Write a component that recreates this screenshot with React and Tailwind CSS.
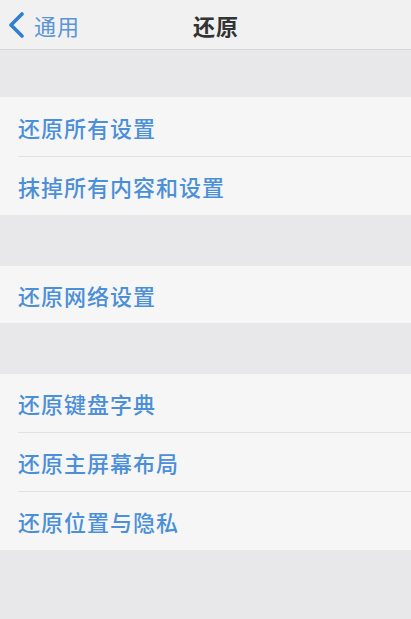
import React from "react";

const font = { fontFamily: '"Noto Sans CJK SC", "Noto Sans", sans-serif' };

function Row({ label, h, sep }) {
  return (
    <div className="flex flex-col">
      {sep && <div className="ml-[18px] h-px bg-[#e2e2e4]" />}
      <div className={`flex items-center pl-[18px] ${h}`}>
        <span className="text-[22px] leading-none tracking-[1px] font-medium text-[#4b8fd8]">{label}</span>
      </div>
    </div>
  );
}

export default function App() {
  return (
    <div className="w-[411px] h-[619px] bg-[#e8e8ea] flex flex-col overflow-hidden" style={font}>
      <div className="relative h-[50px] bg-[#f1f1f1] border-b border-[#d8d8da] flex items-center">
        <div className="flex items-center pl-[8px] gap-[9px]">
          <svg width="17" height="26" viewBox="0 0 17 26" className="mt-[1px]">
            <path d="M14 2 L3 13 L14 24" fill="none" stroke="#2f7fd3" strokeWidth="3.6" strokeLinecap="round" strokeLinejoin="round" />
          </svg>
          <span className="text-[22px] leading-none tracking-[1px] text-[#5a94d6]">通用</span>
        </div>
        <div className="absolute left-[193px] top-0 h-full flex items-center">
          <span className="text-[22px] leading-none tracking-[1px] font-semibold text-[#333333]">还原</span>
        </div>
      </div>
      <div className="h-[47px]" />
      <div className="bg-[#f6f6f6] flex flex-col">
        <Row label="还原所有设置" h="h-[59px]" />
        <Row label="抹掉所有内容和设置" h="h-[58px]" sep />
      </div>
      <div className="h-[51px]" />
      <div className="bg-[#f6f6f6] flex flex-col">
        <Row label="还原网络设置" h="h-[57px]" />
      </div>
      <div className="h-[51px]" />
      <div className="bg-[#f6f6f6] flex flex-col">
        <Row label="还原键盘字典" h="h-[58px]" />
        <Row label="还原主屏幕布局" h="h-[58px]" sep />
        <Row label="还原位置与隐私" h="h-[58px]" sep />
      </div>
    </div>
  );
}
